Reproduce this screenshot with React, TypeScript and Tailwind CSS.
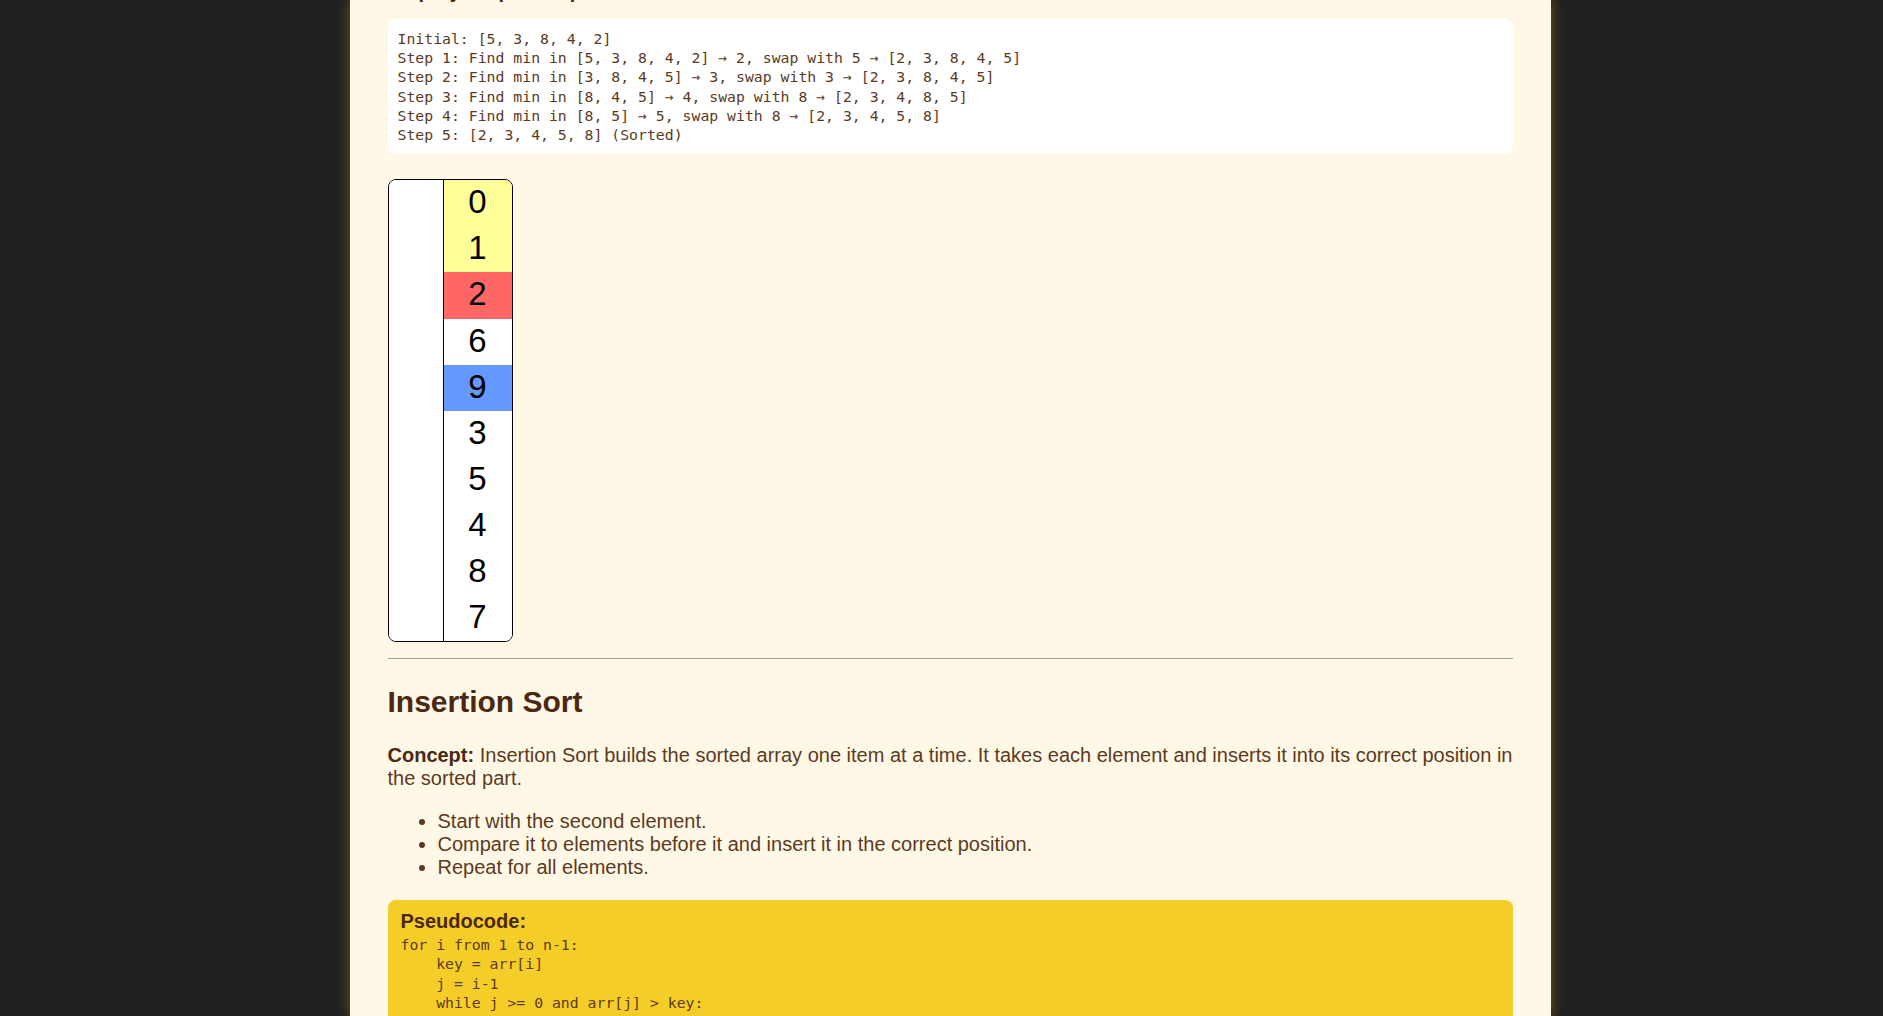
import React from "react";

const rows: { v: string; bg: string }[] = [
  { v: "0", bg: "bg-[#ffff99]" },
  { v: "1", bg: "bg-[#ffff99]" },
  { v: "2", bg: "bg-[#ff6666]" },
  { v: "6", bg: "bg-white" },
  { v: "9", bg: "bg-[#6699ff]" },
  { v: "3", bg: "bg-white" },
  { v: "5", bg: "bg-white" },
  { v: "4", bg: "bg-white" },
  { v: "8", bg: "bg-white" },
  { v: "7", bg: "bg-white" },
];

const steps = `Initial: [5, 3, 8, 4, 2]
Step 1: Find min in [5, 3, 8, 4, 2] → 2, swap with 5 → [2, 3, 8, 4, 5]
Step 2: Find min in [3, 8, 4, 5] → 3, swap with 3 → [2, 3, 8, 4, 5]
Step 3: Find min in [8, 4, 5] → 4, swap with 8 → [2, 3, 4, 8, 5]
Step 4: Find min in [8, 5] → 5, swap with 8 → [2, 3, 4, 5, 8]
Step 5: [2, 3, 4, 5, 8] (Sorted)`;

const pseudo = `for i from 1 to n-1:
    key = arr[i]
    j = i-1
    while j >= 0 and arr[j] > key:
        arr[j+1] = arr[j]
        j = j-1
    arr[j+1] = key`;

const mono = "font-['DejaVu_Sans_Mono','Liberation_Mono',monospace]";

export default function App() {
  return (
    <div className="min-h-screen bg-[#212121] pl-[17px] flex justify-center overflow-hidden h-[1016px]">
      <div className="w-[1201px] bg-[#fff8e6] px-[38px] shadow-[0_0_12px_rgba(255,215,0,0.35)] font-['Liberation_Sans',Arial,sans-serif] text-[20px] text-[#5c3a1e]">
        <h3 className="mt-[-20.5px] text-[20px] leading-[23px] font-bold text-[#4b2812]">
          Step-by-Step Example
        </h3>
        <pre
          className={`${mono} mt-[16.5px] bg-white rounded-[8px] px-[10px] py-[10px] text-[14.8px] leading-[19.2px] text-[#5c3a1e] whitespace-pre`}
        >
          {steps}
        </pre>
        <div className="mt-[25px] inline-flex border border-black rounded-[8px] overflow-hidden bg-white">
          <div className="w-[55px] bg-white border-r border-black" />
          <div className="w-[68px] flex flex-col">
            {rows.map((r, i) => (
              <div
                key={i}
                className={`${r.bg} h-[46.1px] flex items-center justify-center pb-[3px] text-[33px] text-black leading-none`}
              >
                {r.v}
              </div>
            ))}
          </div>
        </div>
        <hr className="mt-[8.5px] border-0 border-t border-[#a0a0a0]" />
        <h2 className="mt-[26px] text-[30px] leading-[34.5px] font-bold text-[#4b2812]">
          Insertion Sort
        </h2>
        <p className="mt-[25px] leading-[23px]">
          <strong className="text-[#4b2812]">Concept:</strong> Insertion Sort builds the sorted array one item at a time. It
          takes each element and inserts it into its correct position in the sorted part.
        </p>
        <ul className="mt-[20px] list-disc pl-[50px] leading-[23px]">
          <li>Start with the second element.</li>
          <li>Compare it to elements before it and insert it in the correct position.</li>
          <li>Repeat for all elements.</li>
        </ul>
        <div className="mt-[20.5px] bg-[#f5cd28] rounded-[8px] px-[13px] pt-[10.5px] pb-[12px]">
          <strong className="block leading-[23px] text-[#4b2812]">Pseudocode:</strong>
          <pre className={`${mono} mt-[2px] text-[14.8px] leading-[19.2px] text-[#5c3a1e] whitespace-pre`}>
            {pseudo}
          </pre>
        </div>
      </div>
    </div>
  );
}
